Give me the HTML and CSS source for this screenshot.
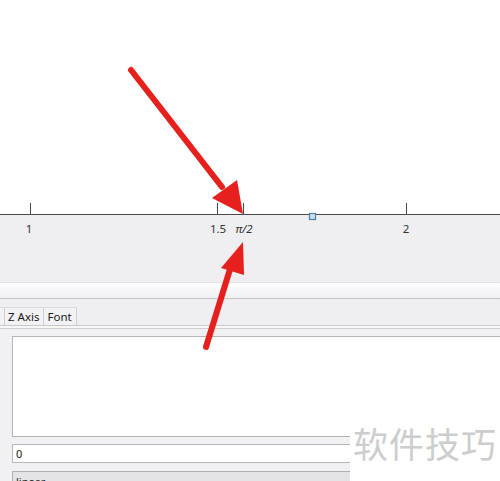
FILE: index.html
```html
<!DOCTYPE html>
<html lang="en">
<head>
  <meta charset="UTF-8" />
  <title>Axis Properties</title>
  <link rel="stylesheet" href="styles.css">
</head>
<body>

  <div class="window">

    <!-- plot with x axis -->
    <svg class="chart" width="500" height="282" viewBox="0 0 500 282">
      <rect x="0" y="0" width="500" height="214" fill="#ffffff" />
      <rect x="0" y="214" width="500" height="68" fill="#efeef0" />
      <line x1="0" y1="214.5" x2="500" y2="214.5" stroke="#4a4a4a" stroke-width="1" />
      <g stroke="#4a4a4a" stroke-width="1">
        <line x1="30.5" y1="203" x2="30.5" y2="214" />
        <line x1="217.5" y1="203" x2="217.5" y2="214" />
        <line x1="243.5" y1="203" x2="243.5" y2="214" />
        <line x1="406.5" y1="203" x2="406.5" y2="214" />
      </g>
      <rect x="309.5" y="213.5" width="6" height="6" fill="#cfe0ee" stroke="#4b7fae" stroke-width="1.2" />
      <g class="tick-label">
        <text x="29" y="233" text-anchor="middle">1</text>
        <text x="218" y="233" text-anchor="middle">1.5</text>
        <text x="244" y="233" text-anchor="middle" font-style="italic">π/2</text>
        <text x="406" y="233" text-anchor="middle">2</text>
      </g>
    </svg>

    <div class="toolbar"></div>

    <div class="tab-row">
      <div class="tab tab-cut"></div>
      <div class="tab">Z Axis</div>
      <div class="tab">Font</div>
    </div>

    <div class="panel">
      <div class="text-area"></div>
      <div class="field">0</div>
      <div class="dropdown">linear</div>
    </div>

  </div>

  <!-- annotation arrows drawn over the screenshot -->
  <svg class="arrows" width="500" height="481" viewBox="0 0 500 481">
    <g stroke="#e6201d" stroke-width="6" stroke-linecap="round" fill="none">
      <line x1="131" y1="70" x2="222" y2="187" />
      <line x1="206" y1="347" x2="231" y2="266" />
    </g>
    <g fill="#e6201d">
      <polygon points="212,198 237,180 243,214" />
      <polygon points="221,268 244,275 243,242" />
    </g>
  </svg>

  <div class="watermark">软件技巧</div>

</body>
</html>
```

FILE: styles.css
```css
body {
  margin: 0;
  padding: 0;
  width: 500px;
  height: 481px;
  overflow: hidden;
  background-color: #efeef0;
  font-family: "Noto Sans", "Open Sans", sans-serif;
  color: #222;
  position: relative;
}
.window {
  display: flex;
  flex-direction: column;
  width: 500px;
}
.chart {
  display: block;
}
.tick-label {
  font-family: "Noto Sans", sans-serif;
  font-size: 11.5px;
  fill: #333;
}
.toolbar {
  height: 15px;
  background: linear-gradient(#fdfdfe, #f1f0f3);
  border-top: 1px solid #e4e3e6;
  border-bottom: 1px solid #c6c5c9;
}
.tab-row {
  height: 26px;
  display: flex;
  align-items: flex-end;
  background-color: #efeef0;
  border-bottom: 1px solid #c9c8cc;
}
.tab {
  height: 17px;
  padding: 0 4px 0 3px;
  font-size: 11.5px;
  line-height: 17px;
  color: #1a1a1a;
  background-color: #f2f1f3;
  border-top: 1px solid #dcdbde;
  border-right: 1px solid #cfcfd2;
}
.tab-cut {
  width: 4px;
  padding: 0;
}
.panel {
  display: flex;
  flex-direction: column;
  gap: 7px;
  padding: 8px 0 0 12px;
  background-color: #f1f0f2;
  border-top: 2px solid #f7f7f8;
  box-shadow: inset 0 1px 0 #cfced2;
  height: 160px;
}
.text-area {
  height: 99px;
  background-color: #ffffff;
  border: 1px solid #b3b3b6;
  border-right: none;
}
.field {
  height: 17px;
  background-color: #ffffff;
  border: 1px solid #b8b8bb;
  border-right: none;
  font-size: 11px;
  line-height: 17px;
  padding-left: 3px;
}
.dropdown {
  margin-top: 1px;
  height: 20px;
  background-color: #e4e4e6;
  border: 1px solid #b0b0b3;
  border-right: none;
  font-size: 11px;
  line-height: 20px;
  padding-left: 3px;
}
.arrows {
  position: absolute;
  left: 0;
  top: 0;
}
.watermark {
  position: absolute;
  left: 350px;
  top: 405px;
  width: 150px;
  height: 76px;
  background-color: #ffffff;
  font-family: "Noto Sans CJK SC", sans-serif;
  font-size: 35px;
  line-height: 76px;
  color: #cdcdcd;
  padding-left: 3px;
  box-sizing: border-box;
  letter-spacing: 1px;
}
```
